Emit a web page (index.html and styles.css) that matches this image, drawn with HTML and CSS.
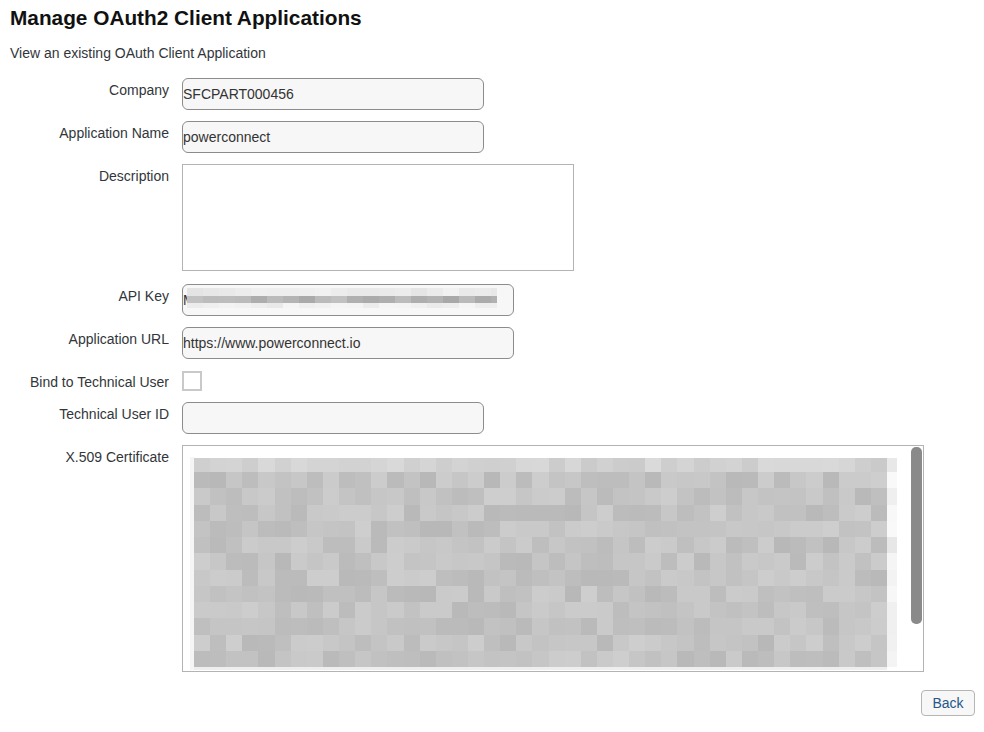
FILE: index.html
```html
<!DOCTYPE html>
<html lang="en">
<head>
    <meta charset="UTF-8">
    <meta name="viewport" content="width=device-width, initial-scale=1.0">
    <title>Manage OAuth2 Client Applications</title>
    <link rel="stylesheet" href="styles.css">
</head>
<body>

    <h1 class="page-title">Manage OAuth2 Client Applications</h1>
    <p class="page-desc">View an existing OAuth Client Application</p>

    <form class="form-grid" id="clientForm">
        <label class="field-label" for="company">Company</label>
        <div><input class="text-field field-short" id="company" value="SFCPART000456" readonly></div>

        <label class="field-label" for="appName">Application Name</label>
        <div><input class="text-field field-short" id="appName" value="powerconnect" readonly></div>

        <label class="field-label" for="description">Description</label>
        <div><textarea class="text-area" id="description" readonly></textarea></div>

        <label class="field-label">API Key</label>
        <div>
            <div class="text-field field-long masked-field">M<canvas class="mask" id="apiKeyMask" width="310" height="20"></canvas></div>
        </div>

        <label class="field-label" for="appUrl">Application URL</label>
        <div><input class="text-field field-long" id="appUrl" value="https://www.powerconnect.io" readonly></div>

        <label class="field-label" for="bindUser">Bind to Technical User</label>
        <div><span class="check-box" id="bindUser"></span></div>

        <label class="field-label" for="techUser">Technical User ID</label>
        <div><input class="text-field field-short" id="techUser" value="" readonly></div>

        <label class="field-label">X.509 Certificate</label>
        <div class="cert-box">
            <canvas class="cert-mask" id="certMask" width="707" height="213"></canvas>
            <div class="scroll-thumb"></div>
        </div>
    </form>

    <div class="actions">
        <button type="button" class="btn">Back</button>
    </div>

    <script src="script.js"></script>
</body>
</html>
```

FILE: styles.css
```css
body {
    font-family: "Liberation Sans", Arial, sans-serif;
    font-size: 14px;
    color: #32363a;
    background: #fff;
    margin: 0;
    padding: 0 9px 0 10px;
}
.page-title {
    font-size: 20.8px;
    line-height: 24px;
    font-weight: bold;
    color: #111;
    margin: 6px 0 0;
}
.page-desc {
    line-height: 16px;
    margin: 15px 0 0;
    color: #32363a;
}
.form-grid {
    display: grid;
    grid-template-columns: 159px auto;
    column-gap: 13px;
    row-gap: 11px;
    align-items: start;
    margin-top: 17px;
}
.field-label {
    text-align: right;
    line-height: 16px;
    padding-top: 4px;
}
.text-field {
    box-sizing: border-box;
    display: block;
    height: 32px;
    padding: 0;
    border: 1px solid #8c8c8c;
    border-radius: 6px;
    background: #f7f7f7;
    font-family: inherit;
    font-size: 14px;
    color: #333;
    outline: none;
}
.field-short {
    width: 302px;
}
.field-long {
    width: 332px;
}
.masked-field {
    position: relative;
    line-height: 30px;
    overflow: hidden;
}
.mask {
    position: absolute;
    left: 4px;
    top: 3px;
}
.text-area {
    box-sizing: border-box;
    display: block;
    width: 392px;
    height: 107px;
    margin-bottom: 2px;
    border: 1px solid #b3b3b3;
    border-radius: 0;
    background: #fff;
    resize: none;
    outline: none;
}
.check-box {
    display: block;
    box-sizing: border-box;
    width: 20px;
    height: 20px;
    margin-top: 1px;
    border: 2px solid #c9c9c9;
    background: #fff;
}
.cert-box {
    position: relative;
    box-sizing: border-box;
    width: 742px;
    height: 227px;
    border: 1px solid #b3b3b3;
    background: #fff;
    padding: 11px 0 0 7px;
    overflow: hidden;
}
.cert-mask {
    display: block;
}
/* fake scrollbar thumb of the certificate field */
.scroll-thumb {
    position: absolute;
    right: 1px;
    top: 1px;
    width: 11px;
    height: 177px;
    border-radius: 5px;
    background: #8a8a8a;
}
.actions {
    display: flex;
    justify-content: flex-end;
    margin-top: 18px;
}
.btn {
    box-sizing: border-box;
    height: 26px;
    width: 54px;
    padding: 0;
    border: 1px solid #b5b5b5;
    border-radius: 4px;
    background: #f7f7f7;
    color: #24568a;
    font-family: inherit;
    font-size: 14px;
    font-weight: 500;
    cursor: pointer;
}
.btn:hover {
    background: #ececec;
}
```

FILE: script.js
```js
// blurred mosaic for the hidden key / certificate values
let seed = 7;
function rand() {
    seed = (seed * 16807) % 2147483647;
    return seed / 2147483647;
}

function gray(min, max) {
    const v = Math.round(min + rand() * (max - min));
    return `rgb(${v},${v},${v})`;
}

function drawApiKey() {
    const ctx = document.getElementById('apiKeyMask').getContext('2d');
    for (let x = 0; x < 310; x += 16) {
        ctx.fillStyle = gray(228, 242);
        ctx.fillRect(x, 0, 16, 8);
        ctx.fillStyle = gray(166, 196);
        ctx.fillRect(x, 8, 16, 7);
        ctx.fillStyle = gray(232, 246);
        ctx.fillRect(x, 15, 16, 5);
    }
}

function drawCertificate() {
    const ctx = document.getElementById('certMask').getContext('2d');
    const cols = 43;
    const cellW = 693 / cols;
    const rowTops = [1, 15];
    for (let i = 1; i <= 12; i++) rowTops.push(15 + Math.round(i * 16.25));

    ctx.fillStyle = '#f5f5f5';
    ctx.fillRect(0, 0, 4, 213);

    for (let r = 0; r < rowTops.length - 1; r++) {
        const y = rowTops[r];
        const h = rowTops[r + 1] - y;
        for (let c = 0; c < cols; c++) {
            const x = 4 + Math.round(c * cellW);
            const w = 4 + Math.round((c + 1) * cellW) - x;
            ctx.fillStyle = r === 0 ? gray(202, 218) : gray(184, 206);
            ctx.fillRect(x, y, w, h);
        }
        ctx.fillStyle = gray(226, 250);
        ctx.fillRect(697, y, 10, h);
    }

    ctx.fillStyle = '#eeeeee';
    ctx.fillRect(4, 210, 693, 3);
}

drawApiKey();
drawCertificate();
```
